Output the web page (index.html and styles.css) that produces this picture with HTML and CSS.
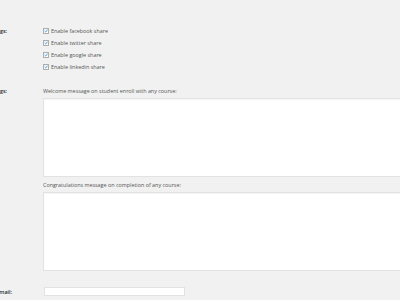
FILE: index.html
```html
<!DOCTYPE html>
<html>
<head>
<meta charset="utf-8">
<link rel="stylesheet" href="styles.css">
</head>
<body>
<div class="form">
  <div class="row row-social">
    <div class="label"><span>Social Settings:</span></div>
    <div class="field">
      <label class="check"><span class="box"><svg viewBox="0 0 10 10" width="6" height="6"><path d="M1.6 5 L4.2 7.6 L8.8 1.8" fill="none" stroke="#1e8cbe" stroke-width="2"/></svg></span>Enable facebook share</label>
      <label class="check"><span class="box"><svg viewBox="0 0 10 10" width="6" height="6"><path d="M1.6 5 L4.2 7.6 L8.8 1.8" fill="none" stroke="#1e8cbe" stroke-width="2"/></svg></span>Enable twitter share</label>
      <label class="check"><span class="box"><svg viewBox="0 0 10 10" width="6" height="6"><path d="M1.6 5 L4.2 7.6 L8.8 1.8" fill="none" stroke="#1e8cbe" stroke-width="2"/></svg></span>Enable google share</label>
      <label class="check"><span class="box"><svg viewBox="0 0 10 10" width="6" height="6"><path d="M1.6 5 L4.2 7.6 L8.8 1.8" fill="none" stroke="#1e8cbe" stroke-width="2"/></svg></span>Enable linkedin share</label>
    </div>
  </div>
  <div class="row row-messages">
    <div class="label"><span>Message Settings:</span></div>
    <div class="field">
      <p class="desc">Welcome message on student enroll with any course:</p>
      <div class="textarea"></div>
      <p class="desc desc-second">Congratulations message on completion of any course:</p>
      <div class="textarea"></div>
    </div>
  </div>
  <div class="row row-email">
    <div class="label label-email"><span>Admin Email:</span></div>
    <div class="field">
      <div class="input"></div>
    </div>
  </div>
</div>
</body>
</html>
```
FILE: styles.css
```css
html, body {
  margin: 0;
  padding: 0;
  background: #f1f1f1;
  overflow: hidden;
}
body {
  width: 400px;
  height: 300px;
  font-family: "Open Sans", "Noto Sans", sans-serif;
  font-size: 5.4px;
  color: #444;
}
.form {
  display: flex;
  flex-direction: column;
  padding-top: 25px;
}
.row {
  display: grid;
  grid-template-columns: 43px 1fr;
}
.label {
  display: flex;
  justify-content: flex-end;
  padding-right: 36px;
  white-space: nowrap;
  font-weight: 600;
  color: #23282d;
  height: 12px;
  align-items: center;
}
.label-email {
  padding-right: 31px;
  height: 10px;
}
.field {
  display: flex;
  flex-direction: column;
  min-width: 0;
}
.check {
  display: flex;
  align-items: center;
  height: 12px;
  gap: 2px;
  color: #555;
  white-space: nowrap;
}
.box {
  width: 6px;
  height: 6px;
  box-sizing: border-box;
  border: 0.5px solid #a9aeb3;
  background: #fff;
  display: flex;
  align-items: center;
  justify-content: center;
  box-shadow: inset 0 0.5px 1px rgba(0,0,0,0.1);
}
.box svg {
  display: block;
}
.row-messages {
  margin-top: 12px;
}
.row-messages .label {
  height: 8px;
  margin-top: 2px;
}
.desc {
  margin: 2px 0 3px;
  height: 8px;
  line-height: 8px;
  color: #555;
  white-space: nowrap;
}
.desc-second {
  margin-top: 4px;
}
.textarea {
  width: 400px;
  height: 79px;
  box-sizing: border-box;
  background: #fff;
  border: 1px solid #e2e2e2;
  box-shadow: inset 0 1px 1px rgba(0,0,0,0.04);
}
.row-email {
  margin-top: 16px;
}
.input {
  width: 141px;
  height: 9px;
  margin-left: 1px;
  box-sizing: border-box;
  background: #fff;
  border: 1px solid #e2e2e2;
}
```
